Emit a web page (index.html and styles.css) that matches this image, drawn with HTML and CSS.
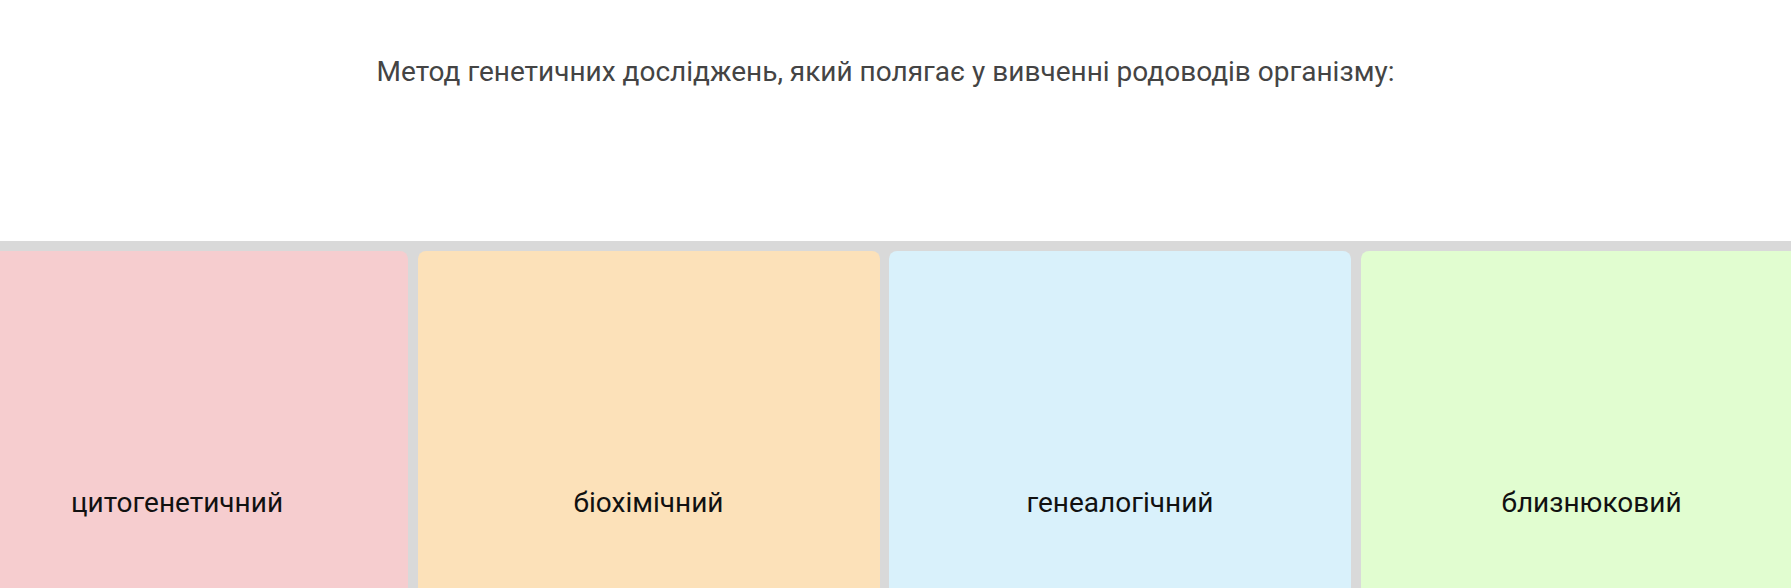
FILE: index.html
```html
<!DOCTYPE html>
<html lang="uk">
<head>
<meta charset="utf-8">
<title>Тест</title>
<link rel="stylesheet" href="styles.css">
</head>
<body>
<div class="page">
  <section class="question">
    <p class="question-text">Метод генетичних досліджень, який полягає у вивченні родоводів організму:</p>
  </section>
  <section class="answers">
    <div class="answer-row">
      <div class="answer answer-red">цитогенетичний</div>
      <div class="answer answer-orange">біохімічний</div>
      <div class="answer answer-blue">генеалогічний</div>
      <div class="answer answer-green">близнюковий</div>
    </div>
  </section>
</div>
</body>
</html>
```

FILE: styles.css
```css
html, body {
  margin: 0;
  padding: 0;
  background: #ffffff;
  overflow: hidden;
}

.page {
  font-family: Roboto, "Noto Sans", Arial, sans-serif;
  width: 1791px;
}

.question {
  height: 241px;
  box-sizing: border-box;
  padding-top: 52px;
  padding-right: 20px;
  text-align: center;
}

.question-text {
  margin: 0;
  font-size: 28px;
  line-height: 40px;
  color: #444444;
}

.answers {
  background: #d9d9d9;
  padding-top: 10px;
  height: 400px;
}

.answer-row {
  display: flex;
  gap: 9.5px;
  margin-left: -54px;
}

.answer {
  flex: 0 0 462px;
  height: 502px;
  border-radius: 8px;
  display: flex;
  align-items: center;
  justify-content: center;
  font-size: 28px;
  color: #111111;
}

.answer-red { background: #f6cdcf; }
.answer-orange { background: #fce1b9; }
.answer-blue { background: #d9f1fb; }
.answer-green { background: #e1fdd0; }
```
